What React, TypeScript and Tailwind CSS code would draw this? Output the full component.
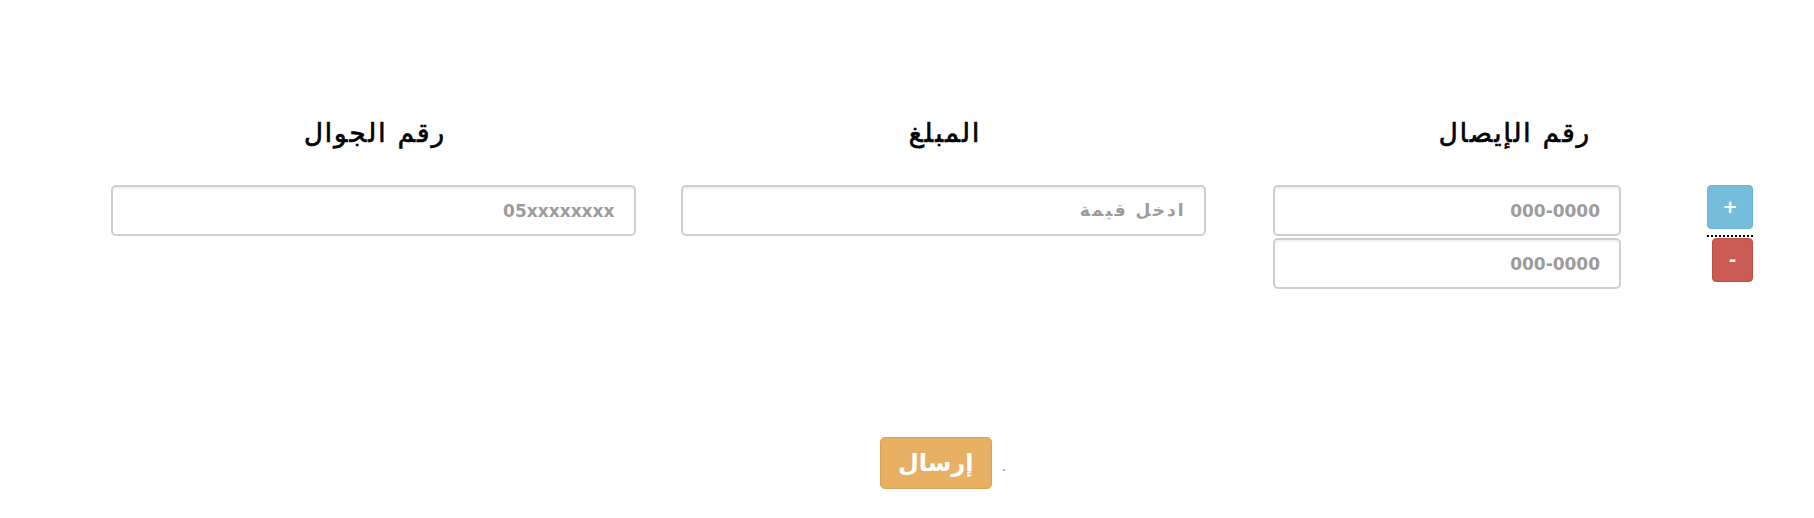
import React from "react";

function Spaced({ text }: { text: string }) {
  return (
    <>
      {Array.from(text).map((c, i) => (
        <span key={i} className="ml-[2px]">
          {c}
        </span>
      ))}
    </>
  );
}

const inputCls =
  "block h-[51px] border-2 border-[#cfcfcf] rounded-[5px] bg-white text-right pr-[19px] pl-3 text-[17px] font-bold text-[#555] placeholder:text-[#9c9c9c] shadow-[inset_0_2px_2px_rgba(0,0,0,0.06)] outline-none";

function Header({ text }: { text: string }) {
  return (
    <h2 className="text-center text-[26px] leading-[30px] font-normal text-black [-webkit-text-stroke:0.7px_#000]">
      <Spaced text={text} />
    </h2>
  );
}

export default function App() {
  return (
    <div
      dir="rtl"
      className="w-full h-[518px] bg-white pl-[88px] pr-[16px] pt-[118px] font-['DejaVu_Sans',sans-serif] text-black"
    >
      <div className="grid grid-cols-3">
        {/* Column 1: receipt number */}
        <div className="flex flex-col">
          <Header text="رقم الإيصال" />
          <div className="mt-[37px] flex items-start gap-[86px] px-[45px]">
            <div className="flex flex-col items-start w-[46px]">
              <button className="w-[46px] h-[44px] rounded-[4px] bg-[#74bedc] border border-[#68b4d3] text-white font-bold text-[18px] leading-none flex items-center justify-center">
                +
              </button>
              <div className="mt-[6px] w-[46px] border-b-2 border-dotted border-black"></div>
              <button className="mt-[1px] w-[41px] h-[44px] rounded-[4px] bg-[#cb5c55] border border-[#bf4d46] text-white font-bold text-[18px] leading-none flex items-center justify-center">
                -
              </button>
            </div>
            <div className="flex flex-col gap-[2px]">
              <input className={inputCls + " w-[348px]"} placeholder="000-0000" />
              <input className={inputCls + " w-[348px]"} placeholder="000-0000" />
            </div>
          </div>
        </div>

        {/* Column 2: amount */}
        <div className="flex flex-col">
          <Header text="المبلغ" />
          <div className="mt-[37px] flex justify-center">
            <div className="relative w-[525px]">
              <input className={inputCls + " w-[525px]"} aria-label="ادخل قيمة" />
              <span className="pointer-events-none absolute inset-y-0 right-[22px] flex items-center text-[17px] font-bold text-[#9c9c9c]">
                <span>
                  <Spaced text="ادخل قيمة" />
                </span>
              </span>
            </div>
          </div>
        </div>

        {/* Column 3: mobile */}
        <div className="flex flex-col">
          <Header text="رقم الجوال" />
          <div className="mt-[37px] flex justify-center">
            <input className={inputCls + " w-[525px]"} placeholder="05xxxxxxxx" />
          </div>
        </div>
      </div>

      <div className="mt-[148px] flex justify-center items-baseline gap-[10px]">
        <span className="text-[#888] text-[14px]">.</span>
        <button className="w-[112px] h-[52px] rounded-[5px] bg-[#e7b062] border border-[#dba352] text-white font-bold text-[24px] leading-none">
          إرسال
        </button>
      </div>
    </div>
  );
}
